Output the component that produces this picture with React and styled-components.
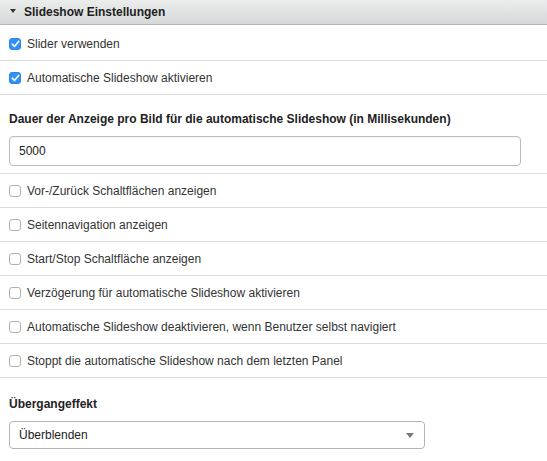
import React, { useState } from "react";
import styled, { createGlobalStyle } from "styled-components";

const Global = createGlobalStyle`
  html, body { margin: 0; padding: 0; background: #fff; }
  body { font-family: "Liberation Sans", Arial, Helvetica, sans-serif; font-size: 12px; color: #333; }
  * { box-sizing: border-box; }
`;

const Panel = styled.div`
  width: 547px;
  display: flex;
  flex-direction: column;
`;

const Header = styled.div`
  height: 25px;
  display: flex;
  align-items: center;
  gap: 8px;
  padding: 0 0 1px 10px;
  background: linear-gradient(#ebeded, #d6d9d9);
  border-bottom: 1px solid #b4b6b6;
  margin-bottom: 2px;
  font-weight: bold;
  font-size: 12px;
  color: #1d1d1d;
`;

const Caret = styled.span`
  width: 0;
  height: 0;
  border-left: 3.5px solid transparent;
  border-right: 3.5px solid transparent;
  border-top: 4px solid #333;
  margin-top: -1px;
`;

const Row = styled.label`
  height: 34px;
  display: flex;
  align-items: center;
  gap: 6px;
  padding-left: 9px;
  border-bottom: 1px solid #dcdcdc;
  color: #333;
  cursor: pointer;
`;

const Box = styled.span`
  width: 12px;
  height: 12px;
  border-radius: 3px;
  flex: none;
  display: flex;
  align-items: center;
  justify-content: center;
  background: ${(p) => (p.$on ? "#3091f6" : "#fff")};
  border: 1px solid ${(p) => (p.$on ? "#2a86e8" : "#b0b0b0")};
`;

const Field = styled.div`
  display: flex;
  flex-direction: column;
  gap: 10px;
  padding: ${(p) => p.$pad};
  border-bottom: ${(p) => (p.$last ? "none" : "1px solid #dcdcdc")};
`;

const FieldLabel = styled.div`
  font-weight: bold;
  color: #222;
  font-size: 12px;
  line-height: 14px;
`;

const TextInput = styled.input`
  width: 512px;
  height: 30px;
  border: 1px solid #bcbcbc;
  border-radius: 4px;
  padding: 0 9px;
  font-family: inherit;
  font-size: 12px;
  color: #222;
  outline: none;
  box-shadow: inset 0 1px 1px rgba(0,0,0,0.04);
`;

const SelectBox = styled.div`
  width: 416px;
  height: 28px;
  border: 1px solid #b4b4b4;
  border-radius: 4px;
  display: flex;
  align-items: center;
  justify-content: space-between;
  padding: 0 10px 0 9px;
  color: #222;
  font-size: 12px;
  background: #fff;
`;

const SelectArrow = styled.span`
  width: 0;
  height: 0;
  border-left: 4px solid transparent;
  border-right: 4px solid transparent;
  border-top: 5px solid #7a7a7a;
`;

const Check = ({ on }) => (
  <Box $on={on}>
    {on && (
      <svg width="9" height="8" viewBox="0 0 9 8">
        <path d="M1.2 4.2 L3.5 6.4 L7.8 1.3" fill="none" stroke="#fff" strokeWidth="1.6" strokeLinecap="round" strokeLinejoin="round" />
      </svg>
    )}
  </Box>
);

const CheckRow = ({ label, initial }) => {
  const [on, setOn] = useState(initial);
  return (
    <Row onClick={() => setOn(!on)}>
      <Check on={on} />
      <span>{label}</span>
    </Row>
  );
};

const lower = [
  "Vor-/Zurück Schaltflächen anzeigen",
  "Seitennavigation anzeigen",
  "Start/Stop Schaltfläche anzeigen",
  "Verzögerung für automatische Slideshow aktivieren",
  "Automatische Slideshow deaktivieren, wenn Benutzer selbst navigiert",
  "Stoppt die automatische Slideshow nach dem letzten Panel",
];

export default function App() {
  const [val, setVal] = useState("5000");
  return (
    <>
      <Global />
      <Panel>
        <Header>
          <Caret />
          <span>Slideshow Einstellungen</span>
        </Header>
        <CheckRow label="Slider verwenden" initial={true} />
        <CheckRow label="Automatische Slideshow aktivieren" initial={true} />
        <Field $pad="17px 9px 7px 9px">
          <FieldLabel>Dauer der Anzeige pro Bild für die automatische Slideshow (in Millisekunden)</FieldLabel>
          <TextInput value={val} onChange={(e) => setVal(e.target.value)} />
        </Field>
        {lower.map((l) => (
          <CheckRow key={l} label={l} initial={false} />
        ))}
        <Field $pad="19px 9px 0 9px" $last>
          <FieldLabel>Übergangeffekt</FieldLabel>
          <SelectBox>
            <span>Überblenden</span>
            <SelectArrow />
          </SelectBox>
        </Field>
      </Panel>
    </>
  );
}
